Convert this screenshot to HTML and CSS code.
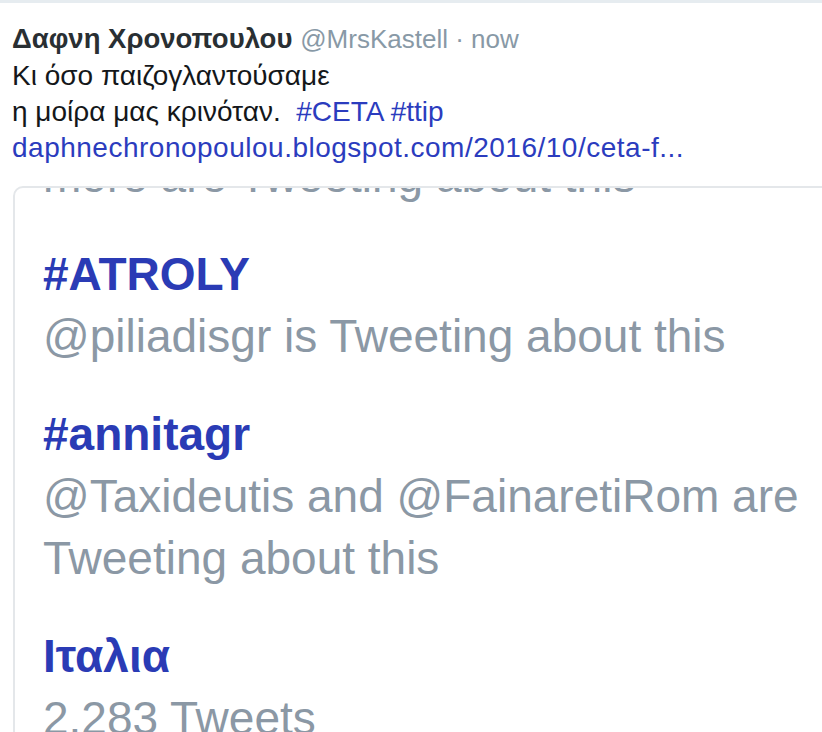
FILE: index.html
```html
<!DOCTYPE html>
<html lang="el">
<head>
<meta charset="utf-8">
<title>Tweet</title>
<link rel="stylesheet" href="styles.css">
</head>
<body>
<div class="topline"></div>
<div class="tweet">
  <div class="header"><span class="name">Δαφνη Χρονοπουλου</span> <span class="meta">@MrsKastell · now</span></div>
  <div class="line">Κι όσο παιζογλαντούσαμε</div>
  <div class="line">η μοίρα μας κρινόταν.&nbsp; <span class="link">#CETA</span> <span class="link">#ttip</span></div>
  <div class="line"><span class="link url">daphnechronopoulou.blogspot.com/2016/10/ceta-f...</span></div>
</div>
<div class="card">
  <div class="trends">
    <div class="item">
      <div class="desc">more are Tweeting about this</div>
    </div>
    <div class="item">
      <div class="trend">#ATROLY</div>
      <div class="desc">@piliadisgr is Tweeting about this</div>
    </div>
    <div class="item">
      <div class="trend">#annitagr</div>
      <div class="desc">@Taxideutis and @FainaretiRom are Tweeting about this</div>
    </div>
    <div class="item">
      <div class="trend">Ιταλια</div>
      <div class="desc">2.283 Tweets</div>
    </div>
  </div>
</div>
</body>
</html>
```
FILE: styles.css
```css
html, body {
  margin: 0;
  padding: 0;
  background: #ffffff;
  overflow: hidden;
}
body {
  width: 822px;
  height: 732px;
  font-family: "Liberation Sans", Arial, sans-serif;
}
.topline {
  height: 3px;
  background: #e6ecf0;
}
.tweet {
  padding: 17px 0 0 12px;
  font-size: 28px;
  line-height: 36px;
  color: #14171a;
}
.header {
  line-height: 38px;
  white-space: nowrap;
}
.name {
  font-weight: bold;
  font-size: 27.5px;
  color: #292f33;
}
.meta {
  font-size: 26px;
  color: #8899a6;
}
.link {
  color: #2b3cbe;
}
.url {
  letter-spacing: 0.5px;
}
.card {
  margin: 20px 0 0 13px;
  width: 830px;
  height: 560px;
  border: 2px solid #e4e7ea;
  border-radius: 10px;
  overflow: hidden;
  box-sizing: border-box;
}
.trends {
  margin-top: -43px;
  padding-left: 28px;
  display: flex;
  flex-direction: column;
  gap: 36px;
  font-size: 46px;
  line-height: 62px;
}
.trend {
  font-weight: bold;
  color: #2a3bb5;
}
.desc {
  color: #8b98a5;
  width: 775px;
}
```
